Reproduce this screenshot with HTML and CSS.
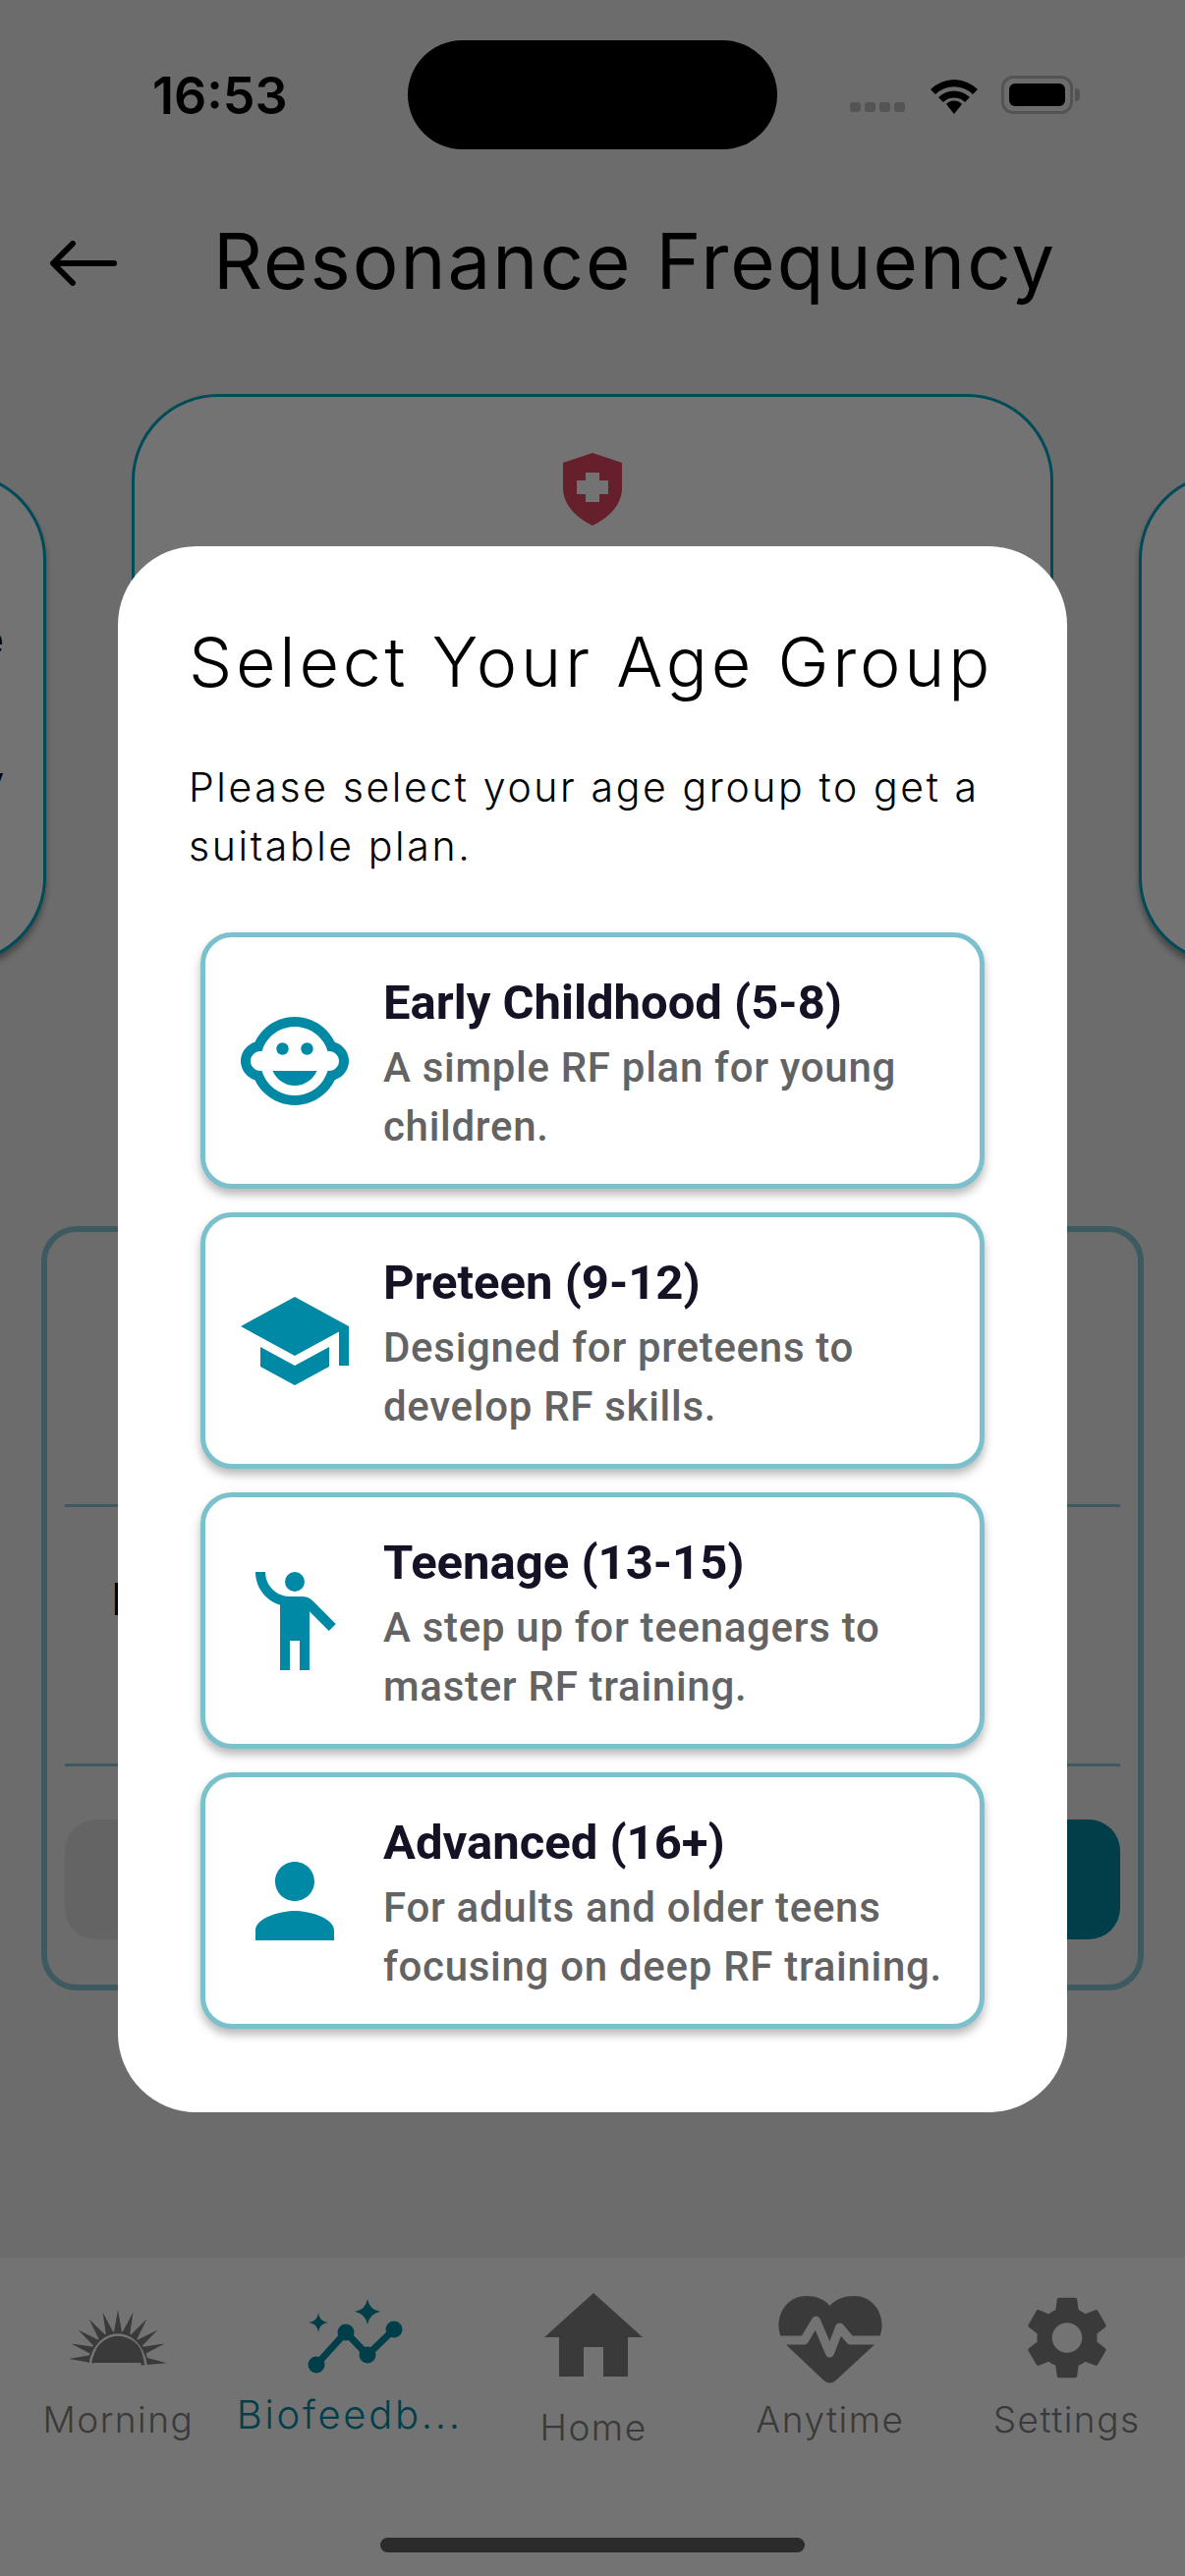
FILE: index.html
```html
<!DOCTYPE html>
<html lang="en">
<head>
<title>Resonance Frequency</title>
<meta charset="utf-8" />
<link rel="stylesheet" href="styles.css">
</head>
<body>
	<div id="screen">
		<div class="status">
			<span class="time">16:53</span>
			<div class="island"></div>
			<div class="signal"><i></i><i></i><i></i><i></i></div>
			<svg class="wifi" width="50" height="38" viewBox="0 0 50 38">
				<path d="M1 13 A34 34 0 0 1 49 13 L44 18 A27 27 0 0 0 6 18Z" />
				<path d="M9 21 A23 23 0 0 1 41 21 L36 26 A16 16 0 0 0 14 26Z" />
				<path d="M17 28 A11 11 0 0 1 33 28 L25 38Z" />
			</svg>
			<div class="battery"><b></b></div>
		</div>

		<div class="header">
			<svg class="back" width="70" height="46" viewBox="0 0 70 46">
				<path d="M66 23 H6 M24 3 L4 23 L24 43" />
			</svg>
			<h1>Resonance Frequency</h1>
		</div>

		<div class="carousel">
			<div class="slide side"><span>e</span><span>y</span></div>
			<div class="slide main">
				<svg width="60" height="74" viewBox="0 0 60 74">
					<path fill="#e0485f" d="M30 0 L60 10 V36 C60 52 47 66 30 74 C13 66 0 52 0 36 V10Z" />
					<path fill="#fff" d="M23 20 H37 V28 H46 V42 H37 V50 H23 V42 H14 V28 H23Z" />
				</svg>
			</div>
			<div class="slide side"></div>
		</div>

		<div class="panel">
			<div class="panel-row"></div>
			<div class="panel-row"><span class="panel-text">M</span></div>
			<div class="panel-btns">
				<div class="btn btn-gray"></div>
				<div class="btn btn-teal"></div>
			</div>
		</div>

		<div class="tabbar">
			<div class="tab">
				<svg class="tab-icon" width="120" height="110" viewBox="-7.5 -31 120 110">
					<defs><polygon id="ray" points="52.5,0 48,26 57,26" /></defs>
					<use href="#ray" transform="rotate(-90 52.5 50)" />
					<use href="#ray" transform="rotate(-72 52.5 50)" />
					<use href="#ray" transform="rotate(-54 52.5 50)" />
					<use href="#ray" transform="rotate(-36 52.5 50)" />
					<use href="#ray" transform="rotate(-18 52.5 50)" />
					<use href="#ray" />
					<use href="#ray" transform="rotate(18 52.5 50)" />
					<use href="#ray" transform="rotate(36 52.5 50)" />
					<use href="#ray" transform="rotate(54 52.5 50)" />
					<use href="#ray" transform="rotate(72 52.5 50)" />
					<use href="#ray" transform="rotate(95 52.5 50)" />
					<path d="M22 54 C24 33 38 22 52.5 22 C67 22 81 33 83 54Z" />
					<path class="ring" d="M24 56 C27 36 40 25.5 52.5 25.5 C65 25.5 78 36 81 56" />
					<path d="M28 48 C30 35 40 27.5 53 27.5 C66 27.5 76 35 78 48 C62 45 44 45 28 48Z" />
				</svg>
				<span>Morning</span>
			</div>
			<div class="tab active">
				<svg class="tab-icon" width="120" height="110" viewBox="0 0 120 110">
					<path class="line" d="M20 87 L50 54 L72 77 L99 51" />
					<circle cx="20" cy="87" r="8.5" /><circle cx="50" cy="54" r="8.5" />
					<circle cx="72" cy="77" r="8.5" /><circle cx="99" cy="51" r="8.5" />
					<path d="M72 20 Q74 31 85 33 Q74 35 72 46 Q70 35 59 33 Q70 31 72 20Z" />
					<path d="M22 34 Q23 43 32 44 Q23 45 22 54 Q21 45 12 44 Q21 43 22 34Z" />
				</svg>
				<span>Biofeedb...</span>
			</div>
			<div class="tab home">
				<svg class="tab-icon" width="120" height="120" viewBox="0 0 24 24">
					<path d="M10 20v-6h4v6h5v-8h3L12 3 2 12h3v8z" />
				</svg>
				<span>Home</span>
			</div>
			<div class="tab">
				<svg class="tab-icon" width="120" height="110" viewBox="-7.5 -17 120 110">
					<path d="M52 10 C46 3 38 0 28 0 C12 0 0 13 0 30 C0 38 3 45 8 50 L46 86 Q52 91 58 86 L97 50 C102 45 105 38 105 30 C105 13 93 0 77 0 C67 0 58 3 52 10Z" />
					<path class="pulse" d="M-2 45 H26 L38 25 L52 58 L62 32 L73 45 H107" />
				</svg>
				<span>Anytime</span>
			</div>
			<div class="tab">
				<svg class="tab-icon" width="120" height="110" viewBox="-2.1 -2 28.2 25.9">
					<path d="M19.14 12.94c.04-.3.06-.61.06-.94 0-.32-.02-.64-.07-.94l2.03-1.58c.18-.14.23-.41.12-.61l-1.92-3.32c-.12-.22-.37-.29-.59-.22l-2.39.96c-.5-.38-1.03-.7-1.62-.94l-.36-2.54c-.04-.24-.24-.41-.48-.41h-3.84c-.24 0-.43.17-.47.41l-.36 2.54c-.59.24-1.13.57-1.62.94l-2.39-.96c-.22-.08-.47 0-.59.22L2.74 8.87c-.12.21-.08.47.12.61l2.03 1.58c-.05.3-.09.63-.09.94s.02.64.07.94l-2.03 1.58c-.18.14-.23.41-.12.61l1.92 3.32c.12.22.37.29.59.22l2.39-.96c.5.38 1.03.7 1.62.94l.36 2.54c.05.24.24.41.48.41h3.84c.24 0 .44-.17.47-.41l.36-2.54c.59-.24 1.13-.56 1.62-.94l2.39.96c.22.08.47 0 .59-.22l1.92-3.32c.12-.22.07-.47-.12-.61l-2.01-1.58zM12 15.6c-1.98 0-3.6-1.62-3.6-3.6s1.62-3.6 3.6-3.6 3.6 1.62 3.6 3.6-1.62 3.6-3.6 3.6z" />
				</svg>
				<span>Settings</span>
			</div>
		</div>
		<div class="home-bar"></div>

		<!-- age group dialog over the dimmed page -->
		<div class="overlay">
			<div class="modal">
				<h2>Select Your Age Group</h2>
				<p class="intro">Please select your age group to get a suitable plan.</p>
				<ul class="groups">
					<li class="group">
						<svg width="120" height="120" viewBox="0 0 24 24">
							<circle cx="14.5" cy="9.5" r="1.25" /><circle cx="9.5" cy="9.5" r="1.25" />
							<path d="M22.94 12.66c.04-.21.06-.43.06-.66s-.02-.45-.06-.66c-.25-1.51-1.36-2.74-2.81-3.17-.53-1.12-1.28-2.1-2.19-2.91C16.36 3.85 14.28 3 12 3s-4.36.85-5.94 2.26c-.92.81-1.67 1.8-2.19 2.91-1.45.43-2.56 1.65-2.81 3.17-.04.21-.06.43-.06.66s.02.45.06.66c.25 1.51 1.36 2.74 2.81 3.17.52 1.11 1.27 2.09 2.17 2.89C7.62 20.14 9.71 21 12 21s4.38-.86 5.97-2.28c.9-.8 1.65-1.79 2.17-2.89 1.44-.43 2.55-1.65 2.8-3.17zM19 14c-.1 0-.19-.02-.29-.03-.2.67-.49 1.29-.86 1.86C16.6 17.74 14.45 19 12 19s-4.6-1.26-5.85-3.17c-.37-.57-.66-1.19-.86-1.86-.1.01-.19.03-.29.03-1.1 0-2-.9-2-2s.9-2 2-2c.1 0 .19.02.29.03.2-.67.49-1.29.86-1.86C7.4 6.26 9.55 5 12 5s4.6 1.26 5.85 3.17c.37.57.66 1.19.86 1.86.1-.01.19-.03.29-.03 1.1 0 2 .9 2 2s-.9 2-2 2zM7.5 14c.76 1.77 2.49 3 4.5 3s3.74-1.23 4.5-3h-9z" />
						</svg>
						<div class="group-text">
							<h3>Early Childhood (5-8)</h3>
							<p>A simple RF plan for young children.</p>
						</div>
					</li>
					<li class="group">
						<svg width="120" height="120" viewBox="0 0 24 24">
							<path d="M5 13.18v4L12 21l7-3.82v-4L12 17l-7-3.82zM12 3L1 9l11 6 9-4.91V17h2V9L12 3z" />
						</svg>
						<div class="group-text">
							<h3>Preteen (9-12)</h3>
							<p>Designed for preteens to develop RF skills.</p>
						</div>
					</li>
					<li class="group">
						<svg width="120" height="120" viewBox="0 0 24 24">
							<circle cx="12" cy="4" r="2" />
							<path d="M15.89 8.11C15.5 7.72 14.83 7 13.53 7h-2.54C8.24 6.99 6 4.75 6 2H4c0 3.16 2.11 5.84 5 6.71V22h2v-6h2v6h2V10.05L18.95 14l1.41-1.41-4.47-4.48z" />
						</svg>
						<div class="group-text">
							<h3>Teenage (13-15)</h3>
							<p>A step up for teenagers to master RF training.</p>
						</div>
					</li>
					<li class="group">
						<svg width="120" height="120" viewBox="0 0 24 24">
							<path d="M12 12c2.21 0 4-1.79 4-4s-1.79-4-4-4-4 1.79-4 4 1.79 4 4 4zm0 2c-2.67 0-8 1.34-8 4v2h16v-2c0-2.66-5.33-4-8-4z" />
						</svg>
						<div class="group-text">
							<h3>Advanced (16+)</h3>
							<p>For adults and older teens focusing on deep RF training.</p>
						</div>
					</li>
				</ul>
			</div>
		</div>
	</div>
</body>
</html>
```

FILE: styles.css
```css
* {
	margin: 0;
	padding: 0;
	box-sizing: border-box;
}

body {
	font-family: Inter, "Liberation Sans", sans-serif;
	color: #000;
}

li {
	list-style: none;
}

#screen {
	position: relative;
	display: flex;
	flex-direction: column;
	width: 1206px;
	height: 2622px;
	overflow: hidden;
	background: #f0f0f0;
}

/* status bar */
.status {
	display: flex;
	align-items: center;
	height: 193px;
	padding: 0 100px 0 155px;
}

.time {
	width: 260px;
	padding-top: 2px;
	font-size: 52px;
	font-weight: 600;
}

.island {
	width: 376px;
	height: 111px;
	border-radius: 56px;
	background: #000;
}

.signal {
	display: flex;
	gap: 4px;
	margin: 24px 25px 0 74px;
}

.signal i {
	width: 11px;
	height: 10px;
	border-radius: 3px;
	background: #bbb;
}

.wifi {
	margin-right: 23px;
}

.battery {
	position: relative;
	width: 73px;
	height: 39px;
	padding: 5px;
	border: 3px solid #b8b8b8;
	border-radius: 12px;
}

.battery b {
	display: block;
	height: 100%;
	border-radius: 6px;
	background: #000;
}

.battery:after {
	content: "";
	position: absolute;
	top: 10px;
	right: -10px;
	width: 5px;
	height: 13px;
	border-radius: 0 4px 4px 0;
	background: #b8b8b8;
}

/* header */
.header {
	display: flex;
	align-items: center;
	height: 150px;
	padding-left: 50px;
}

.back {
	margin-right: 97px;
}

.back path {
	fill: none;
	stroke: #000;
	stroke-width: 6;
	stroke-linecap: round;
	stroke-linejoin: round;
}

h1 {
	margin-top: -5px;
	font-size: 78px;
	font-weight: 400;
	letter-spacing: 2px;
	white-space: nowrap;
}

/* slides behind the dialog */
.carousel {
	display: flex;
	justify-content: center;
	align-items: center;
	gap: 87px;
	height: 660px;
	margin-top: 58px;
	overflow: hidden;
}

.slide {
	flex-shrink: 0;
	width: 938px;
	border: 3px solid #00a7c4;
	border-radius: 88px;
	background: #fff;
}

.slide.main {
	height: 660px;
	padding-top: 57px;
	text-align: center;
}

.slide.side {
	display: flex;
	flex-direction: column;
	align-items: flex-end;
	gap: 94px;
	height: 500px;
	padding: 142px 40px 0 0;
	font-size: 42px;
	line-height: 50px;
	box-shadow: 0 6px 6px rgba(0, 0, 0, .35);
}

.panel {
	display: flex;
	flex-direction: column;
	width: 1122px;
	height: 778px;
	margin: 187px 0 0 42px;
	padding: 0 18px;
	border: 6px solid #87c8d5;
	border-radius: 36px;
}

.panel-row {
	height: 264px;
	border-bottom: 3px solid #87c8d5;
}

.panel-row:first-child {
	height: 280px;
}

.panel-text {
	display: block;
	padding: 67px 0 0 48px;
	font-family: Roboto, sans-serif;
	font-size: 46px;
	font-weight: 700;
}

.panel-btns {
	display: flex;
	justify-content: space-between;
	margin-top: 54px;
}

.btn {
	width: 500px;
	height: 122px;
	border-radius: 32px;
}

.btn-gray {
	background: #dedede;
}

.btn-teal {
	background: #0089a5;
}

/* tab bar */
.tabbar {
	display: grid;
	grid-template-columns: repeat(5, 1fr);
	margin-top: auto;
	height: 324px;
	background: #fff;
}

.tab {
	padding-top: 22px;
	text-align: center;
	font-size: 37px;
	color: #808080;
}

.tab svg {
	display: block;
	margin: 0 auto;
	fill: #808080;
}

.tab span {
	display: block;
	margin-top: 10px;
	letter-spacing: 1.5px;
	font-weight: 300;
}

.tab.active {
	color: #0089a5;
}

.tab.active svg {
	fill: #0089a5;
}

.tab.active span {
	margin-top: 3px;
	padding-right: 13px;
	font-size: 40px;
	letter-spacing: 2.7px;
}

.tab .line {
	fill: none;
	stroke: #0089a5;
	stroke-width: 7;
}

.tab .ring {
	fill: none;
	stroke: #fff;
	stroke-width: 2.5;
}

.tab .pulse {
	fill: none;
	stroke: #fff;
	stroke-width: 9;
	stroke-linejoin: round;
}

.tab.home svg {
	margin-top: -1px;
}

.tab.home span {
	margin-top: 9px;
}

.home-bar {
	position: absolute;
	left: 387px;
	top: 2583px;
	width: 432px;
	height: 15px;
	border-radius: 8px;
	background: #5f5f5f;
}

/* dialog */
.overlay {
	position: absolute;
	top: 0;
	left: 0;
	right: 0;
	bottom: 0;
	display: flex;
	justify-content: center;
	align-items: flex-start;
	padding-top: 556px;
	background: rgba(0, 0, 0, .55);
}

.modal {
	width: 966px;
	height: 1594px;
	padding: 75px 72px 0;
	border-radius: 80px;
	background: #fff;
}

h2 {
	font-size: 70px;
	font-weight: 300;
	letter-spacing: 3.75px;
	white-space: nowrap;
}

.intro {
	margin-top: 55px;
	font-size: 41px;
	font-weight: 300;
	line-height: 60px;
	letter-spacing: 2.6px;
}

.groups {
	display: flex;
	flex-direction: column;
	gap: 24px;
	margin: 58px 12px 0;
}

.group {
	display: flex;
	align-items: center;
	height: 261px;
	padding-left: 31px;
	border: 5px solid #7bc1cd;
	border-radius: 32px;
	background: #fff;
	box-shadow: 0 6px 10px rgba(0, 0, 0, .28);
}

.group svg {
	flex-shrink: 0;
	fill: #0089a5;
}

.group-text {
	margin: 8px 0 0 30px;
	font-family: Roboto, sans-serif;
}

h3 {
	font-size: 49px;
	font-weight: 700;
	line-height: 60px;
	color: #161226;
}

.group-text p {
	margin-top: 6px;
	font-size: 42px;
	font-weight: 500;
	line-height: 60px;
	letter-spacing: .7px;
	color: #636363;
}
```
